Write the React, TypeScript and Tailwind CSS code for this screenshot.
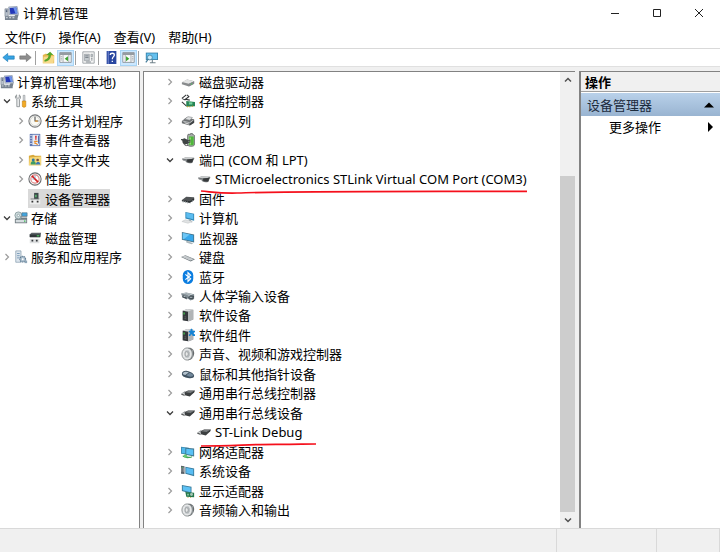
import type { ReactNode } from "react";
import clsx from "clsx";

type IconName =
  | "computer" | "tools" | "clock" | "events" | "shared" | "perf" | "devmgr"
  | "storage" | "diskmgmt" | "services" | "disk" | "controller" | "printer"
  | "battery" | "port" | "firmware" | "pc" | "monitor" | "keyboard"
  | "bluetooth" | "hid" | "software" | "component" | "speaker" | "mouse"
  | "usb" | "network" | "system" | "display";

type Row = {
  label: string;
  icon: IconName;
  level: number;
  state?: "open" | "closed";
  selected?: boolean;
  mark?: "long" | "short";
};

const navRows: Row[] = [
  { label: "计算机管理(本地)", icon: "computer", level: 0 },
  { label: "系统工具", icon: "tools", level: 1, state: "open" },
  { label: "任务计划程序", icon: "clock", level: 2, state: "closed" },
  { label: "事件查看器", icon: "events", level: 2, state: "closed" },
  { label: "共享文件夹", icon: "shared", level: 2, state: "closed" },
  { label: "性能", icon: "perf", level: 2, state: "closed" },
  { label: "设备管理器", icon: "devmgr", level: 2, selected: true },
  { label: "存储", icon: "storage", level: 1, state: "open" },
  { label: "磁盘管理", icon: "diskmgmt", level: 2 },
  { label: "服务和应用程序", icon: "services", level: 1, state: "closed" },
];

const deviceRows: Row[] = [
  { label: "磁盘驱动器", icon: "disk", level: 1, state: "closed" },
  { label: "存储控制器", icon: "controller", level: 1, state: "closed" },
  { label: "打印队列", icon: "printer", level: 1, state: "closed" },
  { label: "电池", icon: "battery", level: 1, state: "closed" },
  { label: "端口 (COM 和 LPT)", icon: "port", level: 1, state: "open" },
  { label: "STMicroelectronics STLink Virtual COM Port (COM3)", icon: "port", level: 2, mark: "long" },
  { label: "固件", icon: "firmware", level: 1, state: "closed" },
  { label: "计算机", icon: "pc", level: 1, state: "closed" },
  { label: "监视器", icon: "monitor", level: 1, state: "closed" },
  { label: "键盘", icon: "keyboard", level: 1, state: "closed" },
  { label: "蓝牙", icon: "bluetooth", level: 1, state: "closed" },
  { label: "人体学输入设备", icon: "hid", level: 1, state: "closed" },
  { label: "软件设备", icon: "software", level: 1, state: "closed" },
  { label: "软件组件", icon: "component", level: 1, state: "closed" },
  { label: "声音、视频和游戏控制器", icon: "speaker", level: 1, state: "closed" },
  { label: "鼠标和其他指针设备", icon: "mouse", level: 1, state: "closed" },
  { label: "通用串行总线控制器", icon: "usb", level: 1, state: "closed" },
  { label: "通用串行总线设备", icon: "usb", level: 1, state: "open" },
  { label: "ST-Link Debug", icon: "usb", level: 2, mark: "short" },
  { label: "网络适配器", icon: "network", level: 1, state: "closed" },
  { label: "系统设备", icon: "system", level: 1, state: "closed" },
  { label: "显示适配器", icon: "display", level: 1, state: "closed" },
  { label: "音频输入和输出", icon: "speaker", level: 1, state: "closed" },
];

const computer = (
  <>
    <path d="M5 1l9-.5 1.500 8.500-9.500.5z" fill="#c9d3df" stroke="#6f7f98" strokeWidth=".6" />
    <path d="M6 2l7.300-.4 1 6.400-7.500.4z" fill="#2438b8" />
    <path d="M10 1.800l3.300-.2 1 6.400-2 .1z" fill="#6d93ea" />
    <path d="M1 3h3.500v8H1z" fill="#b9c2cd" stroke="#6c7684" strokeWidth=".6" />
    <path d="M2 4.500h1.500M2 6h1.500" stroke="#3f4e66" />
    <path d="M1 11h10l1-1.500h3.500l-1 3.500v2H1z" fill="#77828f" />
    <path d="M2 12.500h2M5.500 12.500h2M9 12.500h2" stroke="#dfe5ea" />
  </>
);

const software = (
  <>
    <path d="M2 3l5-2 7 1v11l-5 2-7-1z" fill="#8b8f92" />
    <path d="M2 3l6 1v11l-6-1z" fill="#34383b" />
    <path d="M8 4l6-2v11l-5 2H8z" fill="#b2b5b7" />
    <path d="M2 3l5-2 7 1-6 2z" fill="#d8dadb" />
    <path d="M3.500 5v2.500" stroke="#49d653" strokeWidth="1.300" />
    <path d="M4 10l2 .3M4 12l2 .3" stroke="#777" strokeWidth=".7" />
  </>
);

const icons: Record<IconName, ReactNode> = {
  computer,
  tools: (
    <>
      <path d="M3 1v3l1.500 1L6 4V1c2 1 2 4 .3 5v8.500H3.200V6C1 5 1 2 3 1z" fill="#e7e9ea" stroke="#777c80" strokeWidth=".8" />
      <path d="M10.500 1.500h2V8h-2z" fill="#d7dadd" stroke="#85898c" strokeWidth=".6" />
      <path d="M9.500 8h4v6c0 1.500-4 1.500-4 0z" fill="#f2ab25" stroke="#c07b0b" strokeWidth=".6" />
    </>
  ),
  clock: (
    <>
      <circle cx="8" cy="8" r="7" fill="#fbfaf4" stroke="#77797b" strokeWidth="1.200" />
      <circle cx="8" cy="8" r="5.300" fill="none" stroke="#c4c5c6" strokeWidth=".8" />
      <path d="M8 3v5h4" fill="none" stroke="#43464b" strokeWidth="1.200" />
      <path d="M8 8l3 .2" stroke="#ef9b29" strokeWidth="1.300" />
    </>
  ),
  events: (
    <>
      <path d="M2 1h12v14H2z" fill="#5e77b2" />
      <path d="M5 2h8v12H5z" fill="#e3ebf7" />
      <path d="M2 3h3M2 6h3M2 9h3M2 12h3" stroke="#d2d9ea" />
      <path d="M8 3h2l-.5 5h-1z" fill="#d83232" />
      <path d="M7 9.500l4 4M11 9.500h-3v3" stroke="#ec8d2a" strokeWidth="1.300" fill="none" />
      <path d="M12 3v9" stroke="#425a9c" />
    </>
  ),
  shared: (
    <>
      <path d="M1 3l5-1 2 1h7v11H1z" fill="#d8a93c" />
      <path d="M2 5l13-1v10H1z" fill="#f7d879" />
      <circle cx="6" cy="8" r="1.700" fill="#2f78a5" />
      <path d="M3 13c0-5 6-5 6 0z" fill="#3e9b66" />
      <circle cx="11" cy="8" r="1.500" fill="#784f3d" />
      <path d="M9 13c0-4 5-4 5 0z" fill="#3979b7" />
    </>
  ),
  perf: (
    <>
      <circle cx="8" cy="8" r="7" fill="#f7f7f7" stroke="#686a6c" strokeWidth="1.200" />
      <circle cx="8" cy="8" r="4.700" fill="#fff" stroke="#dd8585" strokeWidth="1.200" />
      <path d="M4.500 4.500l7 7" stroke="#d21f1f" strokeWidth="1.900" />
      <path d="M8 4v3M5 8h2" stroke="#77a7cf" />
    </>
  ),
  devmgr: (
    <>
      <path d="M7 1h5v8H7z" fill="#3d484a" />
      <path d="M8 3h2v3H8z" fill="#54a96a" />
      <path d="M2 9l3-1h9v6H2z" fill="#eceded" />
      <path d="M4 11h2M10 11h2" stroke="#333" strokeWidth="1.800" />
      <path d="M3 8h10" stroke="#6e7476" />
    </>
  ),
  storage: (
    <>
      <path d="M1 9l2-1h12v6H1z" fill="#737d83" />
      <path d="M2 10h12v3H2z" fill="#d5dcdf" />
      <path d="M11.500 11.500H13" stroke="#31bd4b" strokeWidth="1.500" />
      <ellipse cx="5" cy="5" rx="4" ry="4" fill="#cad7d9" stroke="#778c8f" strokeWidth=".8" />
      <circle cx="5" cy="5" r="1.300" fill="#fff" stroke="#779096" strokeWidth=".7" />
      <path d="M9 2h6v4H9z" fill="#42a5df" stroke="#516e80" strokeWidth=".7" />
      <path d="M7 6h8v1.500H7z" fill="#869298" />
    </>
  ),
  diskmgmt: (
    <>
      <path d="M2 4l2-2h11l-1 5H2z" fill="#5b6266" />
      <path d="M2 4h12v3H2z" fill="#2f3538" />
      <path d="M10 5.500h3" stroke="#50c965" strokeWidth="1.300" />
      <path d="M2 9h11v5H2z" fill="#dfe1e2" />
      <path d="M4 11h2M9 11h2" stroke="#303538" strokeWidth="1.800" />
    </>
  ),
  services: (
    <>
      <path d="M2 1h6v13H2z" fill="#dce5ed" stroke="#849bae" strokeWidth=".8" />
      <path d="M3.500 4h3M3.500 6.500h3M3.500 9h3" stroke="#7093b2" />
      <circle cx="10" cy="10.500" r="3.300" fill="#a9bdcc" stroke="#627d93" strokeWidth="1.200" strokeDasharray="1.700 .6" />
      <circle cx="10" cy="10.500" r="1.100" fill="#fff" />
      <path d="M12 12h3v3h-3z" fill="#8fa6b8" />
    </>
  ),
  disk: (
    <>
      <path d="M1 8.500l6-3.500 8 2v3l-6 3-8-2.500z" fill="#888b8d" />
      <path d="M1 8l6-3 8 2-6 3z" fill="#e4e5e5" />
      <path d="M9 10l6-3v3l-6 3z" fill="#85898b" />
      <path d="M11.500 10.500l1-.5" stroke="#45ce57" strokeWidth="1.300" />
    </>
  ),
  controller: (
    <>
      <path d="M1 5l5-4M7 1l2 2-4 3 5 1M1 5l4 2" fill="none" stroke="#303335" strokeWidth="1.200" />
      <path d="M1 9l5 4.500" stroke="#333" strokeWidth="1.200" />
      <path d="M6 8l10 1v5l-10 .5z" fill="#278456" />
      <path d="M9 9.500h4v2.500H9z" fill="#75d39d" />
      <path d="M7 15l1-1M10 15v-1M13 14.500v-1" stroke="#d49d21" strokeWidth="1.200" />
    </>
  ),
  printer: (
    <>
      <path d="M1 8l5-4 9 2v4l-5 3-9-2.500z" fill="#6d7072" />
      <path d="M4 6l4-3 5 1-3 3z" fill="#dfe1e2" stroke="#707375" strokeWidth=".6" />
      <path d="M2 8l8 2 4-3" fill="none" stroke="#c4c7c8" />
      <path d="M4 10l5 1.500" stroke="#eee" />
      <path d="M10 11v2l5-3V7z" fill="#3f4345" />
    </>
  ),
  battery: (
    <>
      <path d="M8 1.500h3V.5h2v1c2 .5 2.500 1 2.500 2V13c0 3-8 3-8 0V3.500c0-1 .5-1.500.5-2z" fill="#a7adaa" stroke="#454b49" strokeWidth=".7" />
      <path d="M9 4h5.500v9c-1 1.500-5.500 1.500-5.500 0z" fill="#4fb63b" />
      <path d="M10.500 5v8" stroke="#9ae178" strokeWidth="1.500" />
      <path d="M1 7l3-1 4 2v4l-3 1-3-1.500z" fill="#3f4444" />
      <path d="M0 7.500h3M8 9l3-1M8 11l3-1" stroke="#444b4a" strokeWidth="1.300" />
      <path d="M3 11c0 3 3 4 5 3" fill="none" stroke="#444" />
    </>
  ),
  port: (
    <>
      <path d="M1 6.500L5 5l10 .5c.5 1 0 2-1 3l-1 2.500c-2 1-5 .8-7-.5L5 9 2 8z" fill="#6f7375" />
      <path d="M1 6.300L5 5l10 .5-3 1.300-6 .2z" fill="#c9cccd" />
      <path d="M7 7.500l7-.8-1 3.800c-2 .8-4.500.5-6-.5z" fill="#36393b" />
      <path d="M2 8l4 .8" stroke="#989c9e" />
    </>
  ),
  firmware: (
    <>
      <path d="M1 9l5-3.500 9 .5v3l-5 3z" fill="#515557" />
      <path d="M1 9l9 1.500 5-3.500v2l-5 3.500-9-2z" fill="#292e30" />
      <path d="M2.500 10v2M5 10.500v2M7.500 11v2M10.500 11.500v1.500M13 9.500v2" stroke="#9ba2a5" />
    </>
  ),
  pc: (
    <>
      <path d="M5 1l10 2v8L5 8.500z" fill="#3188b7" />
      <path d="M6 2l8 1.800v5.700L6 7.500z" fill="#5bbcf0" />
      <path d="M9 9v3l4 1-2-3" fill="#98a7ae" />
      <path d="M1 12l4-2 8 2-5 2z" fill="#e0e2e3" stroke="#b6babc" strokeWidth=".5" />
    </>
  ),
  monitor: (
    <>
      <path d="M1 1l14 3v9L1 10z" fill="#46768e" />
      <path d="M2 2.200l12 2.600v6.800L2 9.200z" fill="#36a7eb" />
      <path d="M2 2.200l8 1.700-7 5.500-1-.2z" fill="#6dc6f5" />
      <path d="M6 11v2l6 2 2-1-4-1.500V12" fill="#abb6bb" />
    </>
  ),
  keyboard: (
    <>
      <path d="M0 8l5-2 11 4.500-5 2.500z" fill="#737c81" />
      <path d="M1 7.800L5 6.500l9.500 4-4 1.500z" fill="#d8dcde" />
      <path d="M3 7.500l8 3.500M5 7l8 3.500" stroke="#a4abaf" strokeWidth=".6" />
    </>
  ),
  bluetooth: (
    <>
      <rect x="2" y="0" width="12" height="16" rx="6" fill="#0b7de0" />
      <path d="M5 5l6 5-3 3V3l3 3-6 5" fill="none" stroke="#fff" strokeWidth="1.300" />
    </>
  ),
  hid: (
    <>
      <path d="M0 5l6-1 9 2v5l-4 2-3-2-6-1z" fill="#7f8b92" />
      <path d="M1 5l5-.7 8 2-5 1.500z" fill="#c7d0d4" />
      <path d="M1 9l2-2 3 2 1 3M8 10l3-3 4 1-1 4-4-.5z" fill="#465057" />
      <path d="M3 8.500h2M10 9.500h3" stroke="#bdc8ce" />
      <path d="M3 5.700l5 1.500M5 5l5 1.500" stroke="#707b82" strokeWidth=".6" />
    </>
  ),
  software,
  component: (
    <>
      {software}
      <path d="M9 3h2c-1-3 3-3 2 0h3v2c-2-1-2 3 0 2v2h-3c1-2-3-2-2 0H9V7c2 1 2-3 0-2z" fill="#1683d3" />
    </>
  ),
  speaker: (
    <>
      <path d="M8 1c4-1 7 2 7 6s-3 8-7 8z" fill="#656a6d" />
      <path d="M11 2v12M13 3v10" stroke="#bfc4c6" strokeWidth=".7" />
      <ellipse cx="7" cy="8" rx="6" ry="7" fill="#dfe2e3" stroke="#7e8385" strokeWidth=".9" />
      <ellipse cx="7" cy="8" rx="3.700" ry="4.800" fill="#b4b9bc" stroke="#f9f9f9" strokeWidth=".8" />
      <ellipse cx="6.500" cy="8" rx="1.700" ry="2.500" fill="#e9ebeb" stroke="#85898b" strokeWidth=".6" />
    </>
  ),
  mouse: (
    <>
      <path d="M1 8c0-3 3-4 6-3.500 4 .5 8 3 8 5.500 0 3-4 3-7 2.500C4 12 1 10.500 1 8z" fill="#405261" />
      <path d="M2 7.500c1-2.500 4-2.500 7-1.500L5 9C3 9 2 8.500 2 7.500z" fill="#b3c1cc" />
      <path d="M6 9.500l4-3c3 1 4 2.500 4 3.500-2 1.500-5 1.500-8-.5z" fill="#71879a" />
    </>
  ),
  usb: (
    <>
      <path d="M0 9.500l4-3 3 1-3 3.500z" fill="#d2d5d6" stroke="#74787a" strokeWidth=".7" />
      <path d="M4 7l4-2 8 .2-1 2.300-5 4.500-5.500-1.500z" fill="#3c3f40" />
      <path d="M5 7.200L8.500 5.500l6 .2L11 8z" fill="#777b7d" />
      <path d="M1 9.500l2.500.8" stroke="#333" strokeWidth=".8" />
    </>
  ),
  network: (
    <>
      <path d="M0 2l9 1v8l-9-1z" fill="#3f8bb0" />
      <path d="M1 3l7 .8v6L1 9z" fill="#50b9ed" />
      <path d="M5 3l10 1v9L5 11z" fill="#3e758e" />
      <path d="M6 4.200l8 .8v6.700L6 10.200z" fill="#59c1f5" />
      <path d="M2 12l7 1.500c4 0 4-1 4-1l-1 2-5 .5-5-1.500z" fill="#41a654" />
      <circle cx="5" cy="12.500" r="2" fill="#66c472" />
    </>
  ),
  system: (
    <>
      <path d="M0 2l4 .5v9L0 11z" fill="#596168" />
      <path d="M1 4v5M3 4v5" stroke="#b5bbc0" strokeWidth=".7" />
      <path d="M5 3l10 2v9L5 11z" fill="#397c9e" />
      <path d="M6 4.200l8 1.700v6.500L6 10.200z" fill="#59bdf3" />
      <path d="M1 4h1" stroke="#49ce53" />
    </>
  ),
  display: (
    <>
      <path d="M1 1l11 2v8L1 8z" fill="#3a7b9a" />
      <path d="M2 2.200l9 1.700v5.500L2 7.200z" fill="#5dc1f4" />
      <path d="M5 9l10 1v5l-9-.5z" fill="#25764b" />
      <circle cx="12" cy="12" r="1.700" fill="#a6c7b6" />
      <path d="M7 11h2v2H7z" fill="#88c8a2" />
      <path d="M8 15v1M11 15v1" stroke="#c89d33" />
    </>
  ),
};

function Icon({ name }: { name: IconName }) {
  return (
    <svg viewBox="0 0 16 16" className="size-3.5 shrink-0" aria-hidden="true">
      {icons[name]}
    </svg>
  );
}

function Chevron({ state }: { state?: "open" | "closed" }) {
  if (!state) return <span className="w-3.5 shrink-0" />;
  return (
    <button className="flex w-3.5 shrink-0 justify-center" aria-label={state === "open" ? "折叠" : "展开"}>
      <svg viewBox="0 0 8 8" className="size-2" fill="none">
        {state === "open" ? (
          <path d="M1 2.500l3 3 3-3" stroke="#3c3c3c" strokeWidth="1.300" />
        ) : (
          <path d="M2.500 1l3 3-3 3" stroke="#9c9c9c" strokeWidth="1.200" />
        )}
      </svg>
    </button>
  );
}

// Red pen strokes under the ST-Link entries
function Mark({ kind }: { kind: "long" | "short" }) {
  return kind === "long" ? (
    <svg viewBox="0 0 327 6" className="absolute top-[18px] -left-3.5 z-10 h-1.5 w-[327px]" fill="none">
      <path d="M0 2C12 3 20 4.500 36 4C90 2 180 2.500 326 2.300" stroke="#f5101c" strokeWidth="1.700" />
    </svg>
  ) : (
    <svg viewBox="0 0 116 6" className="absolute top-[18px] -left-3.5 z-10 h-1.5 w-[116px]" fill="none">
      <path d="M0 4C30 4 50 2.300 75 2.300S100 2 115 2" stroke="#f5101c" strokeWidth="1.700" />
    </svg>
  );
}

function TreeRow({ row, roomy }: { row: Row; roomy?: boolean }) {
  return (
    <li
      className={clsx(
        "flex min-h-0 items-center whitespace-nowrap",
        roomy && "gap-1",
        row.level === 2 && (roomy ? "pl-4" : "pl-3.5"),
      )}
    >
      {row.level > 0 && <Chevron state={row.state} />}
      <span className={clsx("flex h-full items-center", roomy ? "gap-1" : "gap-[3px]", row.selected && "bg-[#d9d9d9]")}>
        <Icon name={row.icon} />
        <span className="relative">
          {row.label}
          {row.mark && <Mark kind={row.mark} />}
        </span>
      </span>
    </li>
  );
}

function Tree({ rows, roomy, className }: { rows: Row[]; roomy?: boolean; className?: string }) {
  return (
    <ul className={clsx("grid min-h-0 flex-1 grid-rows-[repeat(23,minmax(0,1fr))] pb-2", className)}>
      {rows.map((row) => (
        <TreeRow key={row.label} row={row} roomy={roomy} />
      ))}
    </ul>
  );
}

function ToolButton({ label, active, children }: { label: string; active?: boolean; children: ReactNode }) {
  return (
    <button
      aria-label={label}
      className={clsx("flex h-4 w-[17px] items-center justify-center", active && "border border-[#a9d5f5] bg-[#cce8ff]")}
    >
      <svg viewBox="0 0 16 16" className="size-[13px] shrink-0">{children}</svg>
    </button>
  );
}

function Divider() {
  return <span className="mr-1 ml-px h-3.5 w-px bg-[#a0a0a0]" />;
}

const arrow = "M1 8l6-5v3h8v4H7v3z";

export default function App() {
  return (
    <div className="flex h-screen flex-col overflow-hidden bg-[#f0f0f0] font-['Noto_Sans','Noto_Sans_CJK_SC',sans-serif] text-[13px] leading-4 text-black">
      <header className="bg-white">
        <div className="flex h-[26px] items-center pl-1">
          <svg viewBox="0 0 16 16" className="size-[15px]">{computer}</svg>
          <h1 className="ml-1">计算机管理</h1>
          <div className="ml-auto flex">
            <button aria-label="最小化" className="flex w-[42px] justify-center">
              <svg viewBox="0 0 8 8" className="size-2"><path d="M0 4.500h8" stroke="#222" /></svg>
            </button>
            <button aria-label="最大化" className="flex w-[42px] justify-center">
              <svg viewBox="0 0 8 8" className="size-2"><path d="M.5.5h7v7h-7z" fill="none" stroke="#222" /></svg>
            </button>
            <button aria-label="关闭" className="flex w-[42px] justify-center">
              <svg viewBox="0 0 8 8" className="size-2"><path d="M0 0l8 8M8 0L0 8" stroke="#222" /></svg>
            </button>
          </div>
        </div>
        <nav className="flex h-[23px] items-center gap-[13px] border-b border-[#d9d9d9] pl-[5px]">
          <button>文件(F)</button>
          <button>操作(A)</button>
          <button>查看(V)</button>
          <button>帮助(H)</button>
        </nav>
        <div className="flex h-[18px] items-center border-b border-[#e0e0e0]">
          <ToolButton label="后退">
            <path d={arrow} fill="#37a4e4" stroke="#1677b5" strokeWidth=".8" />
          </ToolButton>
          <ToolButton label="前进">
            <path d={arrow} transform="matrix(-1 0 0 1 16 0)" fill="#8d8d8d" stroke="#6f6f6f" strokeWidth=".8" />
          </ToolButton>
          <Divider />
          <ToolButton label="向上">
            <path d="M1 5l4-2 2 2h8v10H1z" fill="#e4b750" />
            <path d="M2 7l13-1-1 9H1z" fill="#f7d98a" />
            <path d="M3 11c4-1 5-3 5-6H5l5-4 4 4h-3c0 5-3 8-8 8z" fill="#57a628" />
          </ToolButton>
          <ToolButton label="显示/隐藏控制台树" active>
            <path d="M1 2h14v12H1z" fill="#fafafa" stroke="#858b91" />
            <path d="M1 2h14v3H1z" fill="#959ba1" />
            <path d="M5 5v9M12 5v9M2 7h2M2 9h2M2 11h2" stroke="#9ba1a6" />
            <path d="M7 9.500l4-3v6z" fill="#39a32d" />
          </ToolButton>
          <Divider />
          <ToolButton label="属性">
            <path d="M1 1h14v14H1z" fill="#f5f5f5" stroke="#949a9e" />
            <path d="M3 4h6v8H3zM11 4h2v3h-2z" fill="#c3c9cd" stroke="#858c91" strokeWidth=".7" />
            <path d="M4 6h4M4 8h4M11 9h2M11 11h2M5 13.500h6" stroke="#6f787f" />
          </ToolButton>
          <Divider />
          <ToolButton label="帮助">
            <path d="M2 0h12v16H2z" fill="#2946a0" />
            <path d="M4 0v16" stroke="#8396d6" />
            <path d="M6.500 5c0-3 5-3 5 0 0 2-2.500 2-2.500 5M9 12v1.500" fill="none" stroke="#fff" strokeWidth="1.600" />
          </ToolButton>
          <ToolButton label="显示/隐藏操作窗格" active>
            <path d="M1 2h14v12H1z" fill="#fafafa" stroke="#858b91" />
            <path d="M1 2h14v3H1z" fill="#959ba1" />
            <path d="M4 5v9M11 5v9M12 7h2M12 9h2M12 11h2" stroke="#9ba1a6" />
            <path d="M5 6.500l4 3-4 3z" fill="#39a32d" />
          </ToolButton>
          <Divider />
          <ToolButton label="扫描检测硬件改动">
            <path d="M1 2h15v9H1z" fill="#347ea6" />
            <path d="M2 3h13v7H2z" fill="#64c0ef" />
            <path d="M9 11v3M6 14.500h7" stroke="#71828b" strokeWidth="1.300" />
            <circle cx="6" cy="8" r="3" fill="#c6eafb" stroke="#477f9c" />
            <path d="M4 10l-3 4" stroke="#477f9c" strokeWidth="1.500" />
          </ToolButton>
        </div>
      </header>

      <main className="flex min-h-0 flex-1 gap-[3px] pt-1">
        <aside className="flex w-[140px] border-t border-r border-[#828282] bg-white">
          <Tree rows={navRows} />
        </aside>

        <section className="mr-px flex min-w-0 flex-1 border-t border-l border-[#828282] bg-white">
          <Tree rows={deviceRows} roomy className="min-w-0 pl-[19px]" />
          <div className="flex w-[15px] flex-col bg-[#f0f0f0]">
            <button aria-label="向上滚动" className="flex h-4 items-center justify-center">
              <svg viewBox="0 0 8 8" className="size-2"><path d="M1 5.500l3-3 3 3" fill="none" stroke="#505050" strokeWidth="1.500" /></svg>
            </button>
            <div className="grow-[88]" />
            <div className="grow-[335] bg-[#cdcdcd]" />
            <button aria-label="向下滚动" className="flex h-4 items-center justify-center">
              <svg viewBox="0 0 8 8" className="size-2"><path d="M1 2.500l3 3 3-3" fill="none" stroke="#505050" strokeWidth="1.500" /></svg>
            </button>
          </div>
        </section>

        <aside className="w-[141px] border-t border-l-2 border-[#828282] bg-white">
          <h2 className="flex h-5 items-center border-b border-[#a0a0a0] bg-[#f0f0f0] pl-1 font-bold">操作</h2>
          <button className="mt-px flex h-[23px] w-full items-center justify-between bg-linear-to-b from-[#b9d1ea] to-[#99b4d1] px-1.5 text-[#1c2b3d]">
            设备管理器
            <svg viewBox="0 0 10 8" className="h-2 w-2.5"><path d="M0 6.500l5-5 5 5z" fill="#000" /></svg>
          </button>
          <button className="flex h-[22px] w-full items-center justify-between pr-1.5 pl-7">
            更多操作
            <svg viewBox="0 0 8 10" className="h-2.5 w-2"><path d="M2 0l5 5-5 5z" fill="#000" /></svg>
          </button>
        </aside>
      </main>

      <footer className="flex h-6 justify-end border-t border-[#d9d9d9]">
        <div className="w-[100px] border-l border-[#d9d9d9]" />
        <div className="w-16 border-x border-[#d9d9d9]" />
      </footer>
    </div>
  );
}
